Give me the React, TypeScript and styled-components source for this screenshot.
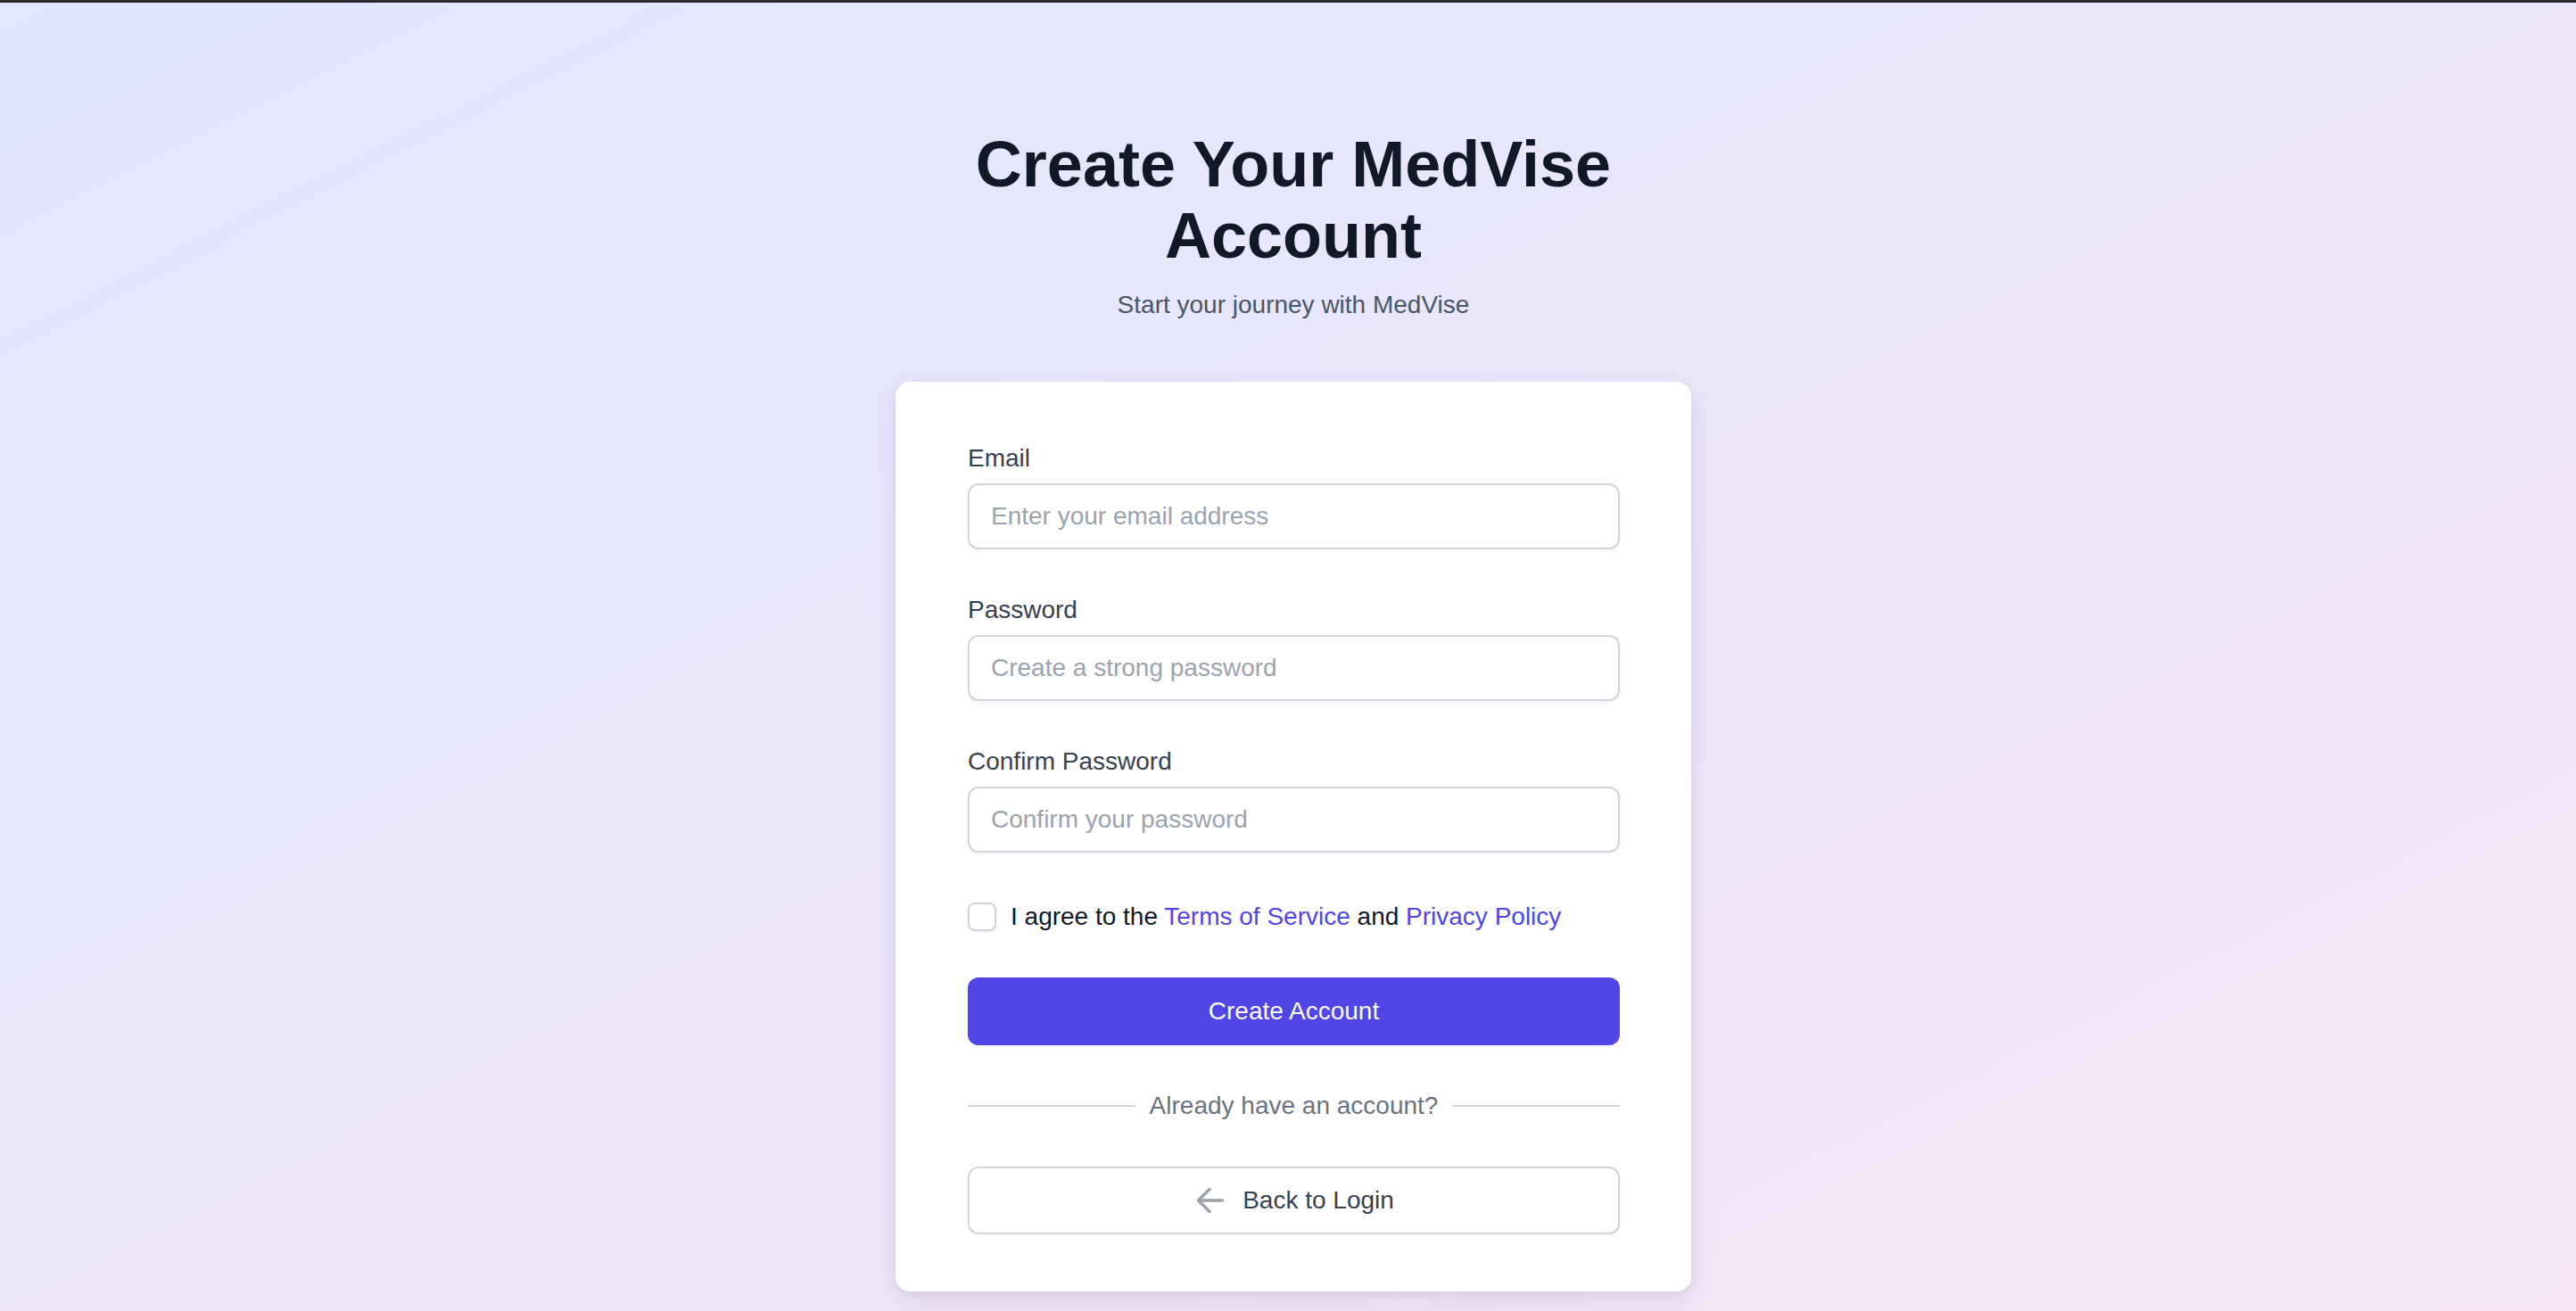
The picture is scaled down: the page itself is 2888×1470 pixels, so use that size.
import React from "react";
import styled, { createGlobalStyle } from "styled-components";

const GlobalStyle = createGlobalStyle`
  html, body {
    margin: 0;
    padding: 0;
  }
  body {
    font-family: "Liberation Sans", Arial, Helvetica, sans-serif;
  }
  * { box-sizing: border-box; }
`;

const Page = styled.div`
  min-height: 1470px;
  border-top: 3px solid #2d2d2f;
  background: linear-gradient(
    to bottom right,
    #e0e7ff 0%,
    #ebe6fb 50%,
    #f6e6f5 100%
  );
  display: flex;
  justify-content: center;
  padding: 141px 0 0 12px;
`;

const Column = styled.main`
  width: 892px;
  display: flex;
  flex-direction: column;
  align-items: stretch;
`;

const Title = styled.h1`
  margin: 0;
  font-size: 72px;
  line-height: 80px;
  font-weight: 700;
  color: #111827;
  text-align: center;
`;

const Subtitle = styled.p`
  margin: 18px 0 0;
  font-size: 28px;
  line-height: 40px;
  color: #4b5563;
  text-align: center;
`;

const Card = styled.section`
  margin-top: 66px;
  background: #ffffff;
  border-radius: 16px;
  padding: 66px 80px 64px 81px;
  box-shadow: 0 10px 30px rgba(90, 70, 130, 0.12), 0 3px 8px rgba(0, 0, 0, 0.06);
`;

const Form = styled.form`
  display: flex;
  flex-direction: column;
  gap: 48px;
`;

const Field = styled.div`
  display: flex;
  flex-direction: column;
`;

const Label = styled.label`
  font-size: 28px;
  line-height: 40px;
  color: #374151;
  margin-bottom: 8px;
`;

const Input = styled.input`
  height: 74px;
  width: 100%;
  border: 2px solid #d1d5db;
  border-radius: 12px;
  padding: 0 24px;
  font-family: inherit;
  font-size: 28px;
  color: #111827;
  background: #ffffff;
  box-shadow: 0 2px 4px rgba(0, 0, 0, 0.05);
  outline: none;
  &::placeholder {
    color: #9ca3af;
  }
`;

const CheckRow = styled.div`
  display: flex;
  align-items: center;
  gap: 16px;
  height: 40px;
  margin-top: 4px;
`;

const Checkbox = styled.input.attrs({ type: "checkbox" })`
  appearance: none;
  margin: 0;
  width: 32px;
  height: 32px;
  border: 2px solid #d1d5db;
  border-radius: 8px;
  background: #ffffff;
  box-shadow: 0 1px 3px rgba(0, 0, 0, 0.06);
  flex-shrink: 0;
`;

const AgreeText = styled.span`
  font-size: 28px;
  line-height: 40px;
  color: #111827;
`;

const Link = styled.a`
  color: #4f46e5;
  text-decoration: none;
`;

const PrimaryButton = styled.button`
  height: 76px;
  width: 100%;
  border: none;
  border-radius: 12px;
  background: #4f46e5;
  color: #ffffff;
  font-family: inherit;
  font-size: 28px;
  box-shadow: 0 2px 4px rgba(0, 0, 0, 0.06);
  cursor: pointer;
`;

const Divider = styled.div`
  display: flex;
  align-items: center;
  gap: 16px;
  height: 40px;
`;

const Rule = styled.span`
  flex: 1;
  height: 2px;
  background: #d1d5db;
`;

const DividerText = styled.span`
  font-size: 28px;
  line-height: 40px;
  color: #6b7280;
`;

const SecondaryButton = styled.button`
  height: 76px;
  width: 100%;
  display: flex;
  align-items: center;
  justify-content: center;
  gap: 21px;
  border: 2px solid #d1d5db;
  border-radius: 12px;
  background: #ffffff;
  color: #374151;
  font-family: inherit;
  font-size: 28px;
  box-shadow: 0 2px 4px rgba(0, 0, 0, 0.05);
  cursor: pointer;
  padding: 0 0 0 4px;
`;

const ArrowIcon = () => (
  <svg width="30" height="28" viewBox="0 0 30 28" fill="none">
    <polyline
      points="14,1.5 1.5,14 14,26.5"
      stroke="#9ca3af"
      strokeWidth="3.5"
      strokeLinecap="round"
      strokeLinejoin="round"
    />
    <line
      x1="1.5"
      y1="14"
      x2="28.5"
      y2="14"
      stroke="#9ca3af"
      strokeWidth="3.5"
      strokeLinecap="round"
    />
  </svg>
);

export default function App() {
  return (
    <>
      <GlobalStyle />
      <Page>
        <Column>
          <Title>Create Your MedVise Account</Title>
          <Subtitle>Start your journey with MedVise</Subtitle>
          <Card>
            <Form onSubmit={(e) => e.preventDefault()}>
              <Field>
                <Label htmlFor="email">Email</Label>
                <Input id="email" type="email" placeholder="Enter your email address" />
              </Field>
              <Field>
                <Label htmlFor="password">Password</Label>
                <Input id="password" type="password" placeholder="Create a strong password" />
              </Field>
              <Field>
                <Label htmlFor="confirm">Confirm Password</Label>
                <Input id="confirm" type="password" placeholder="Confirm your password" />
              </Field>
              <CheckRow>
                <Checkbox id="agree" />
                <AgreeText>
                  I agree to the <Link href="#">Terms of Service</Link> and{" "}
                  <Link href="#">Privacy Policy</Link>
                </AgreeText>
              </CheckRow>
              <PrimaryButton type="submit">Create Account</PrimaryButton>
              <Divider>
                <Rule />
                <DividerText>Already have an account?</DividerText>
                <Rule />
              </Divider>
              <SecondaryButton type="button">
                <ArrowIcon />
                Back to Login
              </SecondaryButton>
            </Form>
          </Card>
        </Column>
      </Page>
    </>
  );
}
